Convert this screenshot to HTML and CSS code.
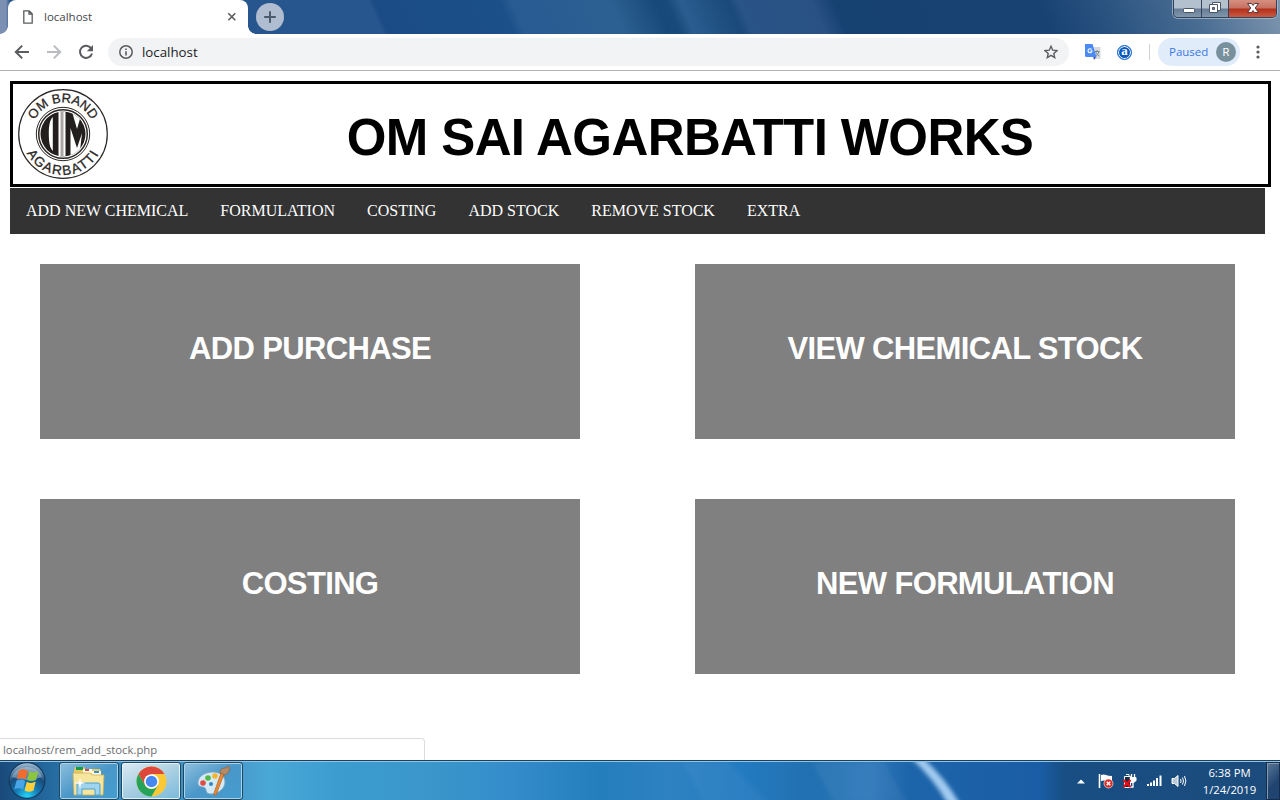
FILE: index.html
```html
<!DOCTYPE html>
<html lang="en">
<head>
<meta charset="utf-8">
<title>localhost</title>
<link rel="stylesheet" href="styles.css">
</head>
<body>
<div class="screen">
  <div class="tabstrip">
    <div class="tab">
      <svg class="tab-file" width="10" height="14" viewBox="0 0 10 14"><path d="M.8.8h5.4l3 3v9.4H.8z M6 1v3h3" fill="none" stroke="#5a5c60" stroke-width="1.3"/></svg>
      <span class="tab-title">localhost</span>
      <svg width="10" height="10" viewBox="0 0 10 10"><path d="M1.300 1.300l7 7M8.300 1.300l-7 7" stroke="#5a5c60" stroke-width="1.600"/></svg>
    </div>
    <div class="newtab"><svg width="28" height="28" viewBox="0 0 28 28"><path d="M14 8.200v11.600M8.200 14h11.600" stroke="#4c5a70" stroke-width="2"/></svg></div>
    <div class="winbtns">
      <span class="wb wb-min"><svg width="28" height="18" viewBox="0 0 28 18"><rect x="9.500" y="8.500" width="11" height="4" rx=".8" fill="#fff" stroke="#4a5568"/></svg></span>
      <span class="wb wb-max"><svg width="26" height="18" viewBox="0 0 26 18"><path d="M10.500 2.500h8v8h-8z" fill="#fff" stroke="#4a5568"/><path d="M7.500 4.500h8v8h-8z" fill="#fff" stroke="#4a5568"/><path d="M10.500 7.500h2v2h-2z" fill="#71869b" stroke="#4a5568"/></svg></span>
      <span class="wb wb-close"><svg width="47" height="18" viewBox="0 0 47 18"><path d="M18.500 3.500h4l1.500 2 1.500-2h4l-3.300 4.500 3.300 4.500h-4l-1.500-2-1.500 2h-4l3.300-4.500z" fill="#fff" stroke="#583a40"/></svg></span>
    </div>
  </div>
  <div class="toolbar">
    <div class="navicons">
      <svg width="16" height="16" viewBox="0 0 16 16"><path d="M15 8H2M8.200 1.600L1.800 8l6.400 6.400" fill="none" stroke="#5a5c60" stroke-width="2"/></svg>
      <svg width="16" height="16" viewBox="0 0 16 16"><path d="M1 8h13M7.800 1.600L14.200 8l-6.400 6.400" fill="none" stroke="#babbbe" stroke-width="2"/></svg>
      <svg width="16" height="16" viewBox="0 0 16 16"><path d="M13.200 4.400A6.100 6.100 0 1 0 14 9.400" fill="none" stroke="#5a5c60" stroke-width="2"/><path d="M15 1v6.200H8.800z" fill="#5a5c60"/></svg>
    </div>
    <div class="omnibox">
      <svg width="14" height="14" viewBox="0 0 14 14"><circle cx="7" cy="7" r="6.200" fill="none" stroke="#5a5c60" stroke-width="1.500"/><path d="M7 6.200v4.300M7 3.400v1.600" stroke="#5a5c60" stroke-width="1.600"/></svg>
      <span class="url">localhost</span>
      <svg width="14" height="14" viewBox="0 0 14 14"><path d="M7 1.300l1.700 3.900 4.300.4-3.200 2.800.9 4.200L7 10.400l-3.700 2.200.9-4.200L1 5.600l4.300-.4z" fill="none" stroke="#5a5c60" stroke-width="1.400"/></svg>
    </div>
    <svg class="ext-tr" width="17" height="17" viewBox="0 0 17 17"><path d="M6 3h9.500v12H10z" fill="#d8dade"/><path d="M9.500 7.500h5M12 6v1.500M10.500 7.500c1 2.500 2.500 4 4 4.500M14 7.500c-.7 2.500-2 4-3.500 4.500" fill="none" stroke="#718791" stroke-width="1"/><path d="M8 12h3v1l-2 3z" fill="#3a4bb7"/><path d="M0 0h7.500l4 13H1.500Q0 13 0 11.500z" fill="#4a8af4"/><path d="M6.600 5.500A2 2 0 1 0 7 7H5.300" fill="none" stroke="#fff" stroke-width="1.100"/></svg>
    <span class="ext-a">a</span>
    <span class="sep"></span>
    <div class="paused"><span>Paused</span><b>R</b></div>
    <svg class="dots" width="4" height="14" viewBox="0 0 4 14"><g fill="#5a5c60"><circle cx="2" cy="2" r="1.600"/><circle cx="2" cy="7" r="1.600"/><circle cx="2" cy="12" r="1.600"/></g></svg>
  </div>
  <main class="page">
    <header class="banner">
      <svg class="logo" width="92" height="92" viewBox="0 0 92 92">
        <defs>
          <path id="arc-top" d="M14.500 46a31.500 31.500 0 0 1 63 0"/>
          <path id="arc-low" d="M5 46a41 41 0 0 0 82 0"/>
          <clipPath id="disc"><circle cx="46" cy="46" r="22.500"/></clipPath>
        </defs>
        <g fill="none" stroke="#2b2725"><circle cx="46" cy="46" r="44.300" stroke-width="1.200"/><circle cx="46" cy="46" r="26.700" stroke-width="1"/><circle cx="46" cy="46" r="24.300" stroke-width="1.500"/></g>
        <g clip-path="url(#disc)">
          <path d="M20 20h52v52H20z" fill="#231f1e"/>
          <path d="M41.500 20h7v52h-7z" fill="#fff"/>
          <path d="M43.500 20h3v52h-3z" fill="#aaa7a6"/>
          <path d="M35.800 29v34c-2.800-3-4-8-4-17s1.200-14 4-17zM54 20l6 21 5-17v-4zM53.500 40L60 60l5-15-3 27h-8.500z" fill="#fff"/>
        </g>
        <g class="logo-text"><text><textPath href="#arc-top" startOffset="50%">OM BRAND</textPath></text><text class="logo-low"><textPath href="#arc-low" startOffset="50%">AGARBATTI</textPath></text></g>
      </svg>
      <h1>OM SAI AGARBATTI WORKS</h1>
    </header>
    <nav class="menu"><a>ADD NEW CHEMICAL</a><a>FORMULATION</a><a>COSTING</a><a>ADD STOCK</a><a>REMOVE STOCK</a><a>EXTRA</a></nav>
    <section class="tiles">
      <div class="tile">ADD PURCHASE</div><div class="tile">VIEW CHEMICAL STOCK</div>
      <div class="tile">COSTING</div><div class="tile">NEW FORMULATION</div>
    </section>
    <div class="status">localhost/rem_add_stock.php</div>
  </main>
  <footer class="taskbar">
    <svg class="streaks" width="1280" height="38" viewBox="0 0 1280 38" preserveAspectRatio="none">
      <defs><filter id="soft"><feGaussianBlur stdDeviation="2"/></filter></defs>
      <g filter="url(#soft)"><path d="M682 0h46l40 40h-64z" fill="#fff" opacity=".04"/><path d="M812 0h72l22 40h-72z" fill="#fff" opacity=".05"/><path d="M911-4h12q22 20 37 46h-12q-15-26-37-46z" fill="#a3cbf0"/></g>
    </svg>
    <div class="start">
      <svg width="40" height="38" viewBox="0 0 40 38">
        <defs><radialGradient id="orb" cx=".5" cy=".95" r=".95"><stop offset="0" stop-color="#25d5fa"/><stop offset=".35" stop-color="#157ab5"/><stop offset=".65" stop-color="#174c7c"/><stop offset="1" stop-color="#a9c4d8"/></radialGradient></defs>
        <circle cx="20" cy="18.500" r="17.800" fill="url(#orb)" stroke="#16395c" stroke-width="1.200"/>
        <path d="M5 15a15.500 13.500 0 0 1 30 0q-15 6-30 0z" fill="#fff" opacity=".3"/>
        <path d="M11.800 8.500q4.500-2.800 9 .2l-2.200 8.800q-4.300-2.500-8.700 0z" fill="#ef6b2e"/><path d="M22.300 9.300q4.300 2.300 9-.3l-2.200 8.800q-4.400 2.300-8.900.3z" fill="#8cc63f"/><path d="M9.500 18.800q4.300-2.500 8.700.2L16 27.500q-4.400-2.600-8.700 0z" fill="#4aa5e8"/><path d="M19.800 19.800q4.300 2.500 8.900-.2l-2.200 8.800q-4.500 2.600-8.900 0z" fill="#ffcf3a"/>
      </svg>
    </div>
    <div class="task"><svg width="34" height="32" viewBox="0 0 34 32"><path d="M2 5l1-3h9l1 2h15l1 3v22H2z" fill="#e6c865"/><path d="M4 2h7v3H4z" fill="#169c46"/><path d="M11 4h9v4h-9z" fill="#fff8dc"/><path d="M13 4h4v2h-4z" fill="#d8473b"/><path d="M20 6h9v4h-9z" fill="#fff8dc"/><path d="M22 6h5v2h-5z" fill="#2f91dc"/><path d="M1 8h17l2 2h12l-1 20H2z" fill="#f6e59c" stroke="#cfb155" stroke-width=".8"/><path d="M5 30V19q0-1 1-1h20q2 0 2 2v10h-5v-6H10v6z" fill="#9fd4f0" stroke="#4aa0cf"/><path d="M8 12l1 5 5 1-5 1-1 5-1-5-5-1 5-1z" fill="#fff"/></svg></div>
    <div class="task active"><svg width="31" height="31" viewBox="0 0 32 32"><circle cx="16" cy="16" r="15.500" fill="#fbc938"/><path d="M2.600 8.250A15.500 15.500 0 0 1 29.400 8.250H16L9.300 19.900z" fill="#de483a"/><path d="M2.600 8.250L9.300 19.900a7.750 7.750 0 0 0 13.400 0L16 31.500A15.500 15.500 0 0 1 2.600 8.250z" fill="#26a35a"/><circle cx="16" cy="16" r="7.600" fill="#fff"/><circle cx="16" cy="16" r="6" fill="#4788f0"/></svg></div>
    <div class="task"><svg width="34" height="32" viewBox="0 0 34 32"><path d="M17 7C7 7 1 13 2 19c1 4 5 2 7 4s0 6 6 6c8 0 14-6 14-12S24 7 17 7z" fill="#d5eaf7" stroke="#7ea6c5"/><circle cx="7" cy="18" r="2.800" fill="#e04b43"/><circle cx="12" cy="13" r="2.800" fill="#54b848"/><circle cx="19" cy="11" r="2.800" fill="#f4b52c"/><circle cx="15" cy="19" r="2" fill="#3787be"/><path d="M28 9l-3-1-7 20q0 3 2 2z" fill="#e98a35" stroke="#b85e1c" stroke-width=".7"/><path d="M24 8q0-5 5-5l4-2q2 6-4 9z" fill="#b58a66" stroke="#8c613e" stroke-width=".7"/></svg></div>
    <div class="tray">
      <svg class="tray-up" width="8" height="5" viewBox="0 0 8 5"><path d="M0 4.500L4 .5l4 4z" fill="#fff"/></svg>
      <svg class="tray-flag" width="16" height="16" viewBox="0 0 16 16"><path d="M1.500 1v14" stroke="#fff" stroke-width="1.600"/><path d="M3 2q3-1 5 0t6 1v6q-4 0-6-1T3 8z" fill="#fff"/><circle cx="10.500" cy="10.500" r="4.500" fill="#d92a24" stroke="#fff" stroke-width=".6"/><path d="M8.700 8.700l3.600 3.600M12.300 8.700l-3.600 3.600" stroke="#fff" stroke-width="1.400"/></svg>
      <svg class="tray-power" width="16" height="16" viewBox="0 0 16 16"><path d="M2.500 3.500h6v11h-6zM4 1.500h3v2" fill="#182c48" stroke="#fff"/><path d="M8 4.500h6v3l-2 2H9z" fill="#fff" stroke="#fff"/><path d="M9.500 1v3M12.500 1v3M11 10v4H9" fill="none" stroke="#fff" stroke-width="1.300"/><path d="M1.500 7l7 7M8.500 7l-7 7" stroke="#f00b12" stroke-width="2.400"/></svg>
      <svg class="tray-net" width="16" height="14" viewBox="0 0 16 14"><path d="M0 10h2v2H0zM3 8.500h2V12H3zM6 6.500h2V12H6zM9 4h2v8H9zM12.500 1.500h2V12h-2z" fill="#fff"/></svg>
      <svg class="tray-vol" width="16" height="14" viewBox="0 0 16 14"><path d="M1 4.500h2.500L7 1.500v11l-3.500-3H1z" fill="#b9c9d9" stroke="#fff"/><path d="M9.500 5q1.200 2 0 4M11.500 3.500q2 3.500 0 7M13.500 2q2.800 5 0 10" fill="none" stroke="#fff"/></svg>
      <div class="clock">6:38 PM<br>1/24/2019</div>
      <span class="desk"></span>
    </div>
  </footer>
</div>
</body>
</html>
```

FILE: styles.css
```css
* { box-sizing: border-box; }
body { margin: 0; font-family: "Open Sans", sans-serif; overflow: hidden; }
svg { display: block; flex: none; }
.screen { width: 1280px; height: 800px; display: flex; flex-direction: column; background: #fff; }

.tabstrip { height: 34px; padding-left: 8px; display: flex; align-items: flex-start;
  background:
    linear-gradient(90deg, #7b90b2 0, #7b90b2 6px, transparent 10px),
    linear-gradient(66deg, transparent 0 328px, transparent 350px, #1b4b84 355px, #1c5088 470px, #285b92 480px, #2d6092 570px, #18497b 612px, #184a7c 622px, #2b5d90 635px, #1a497b 678px, #295488 688px, #295283 754px, #164272 774px, #174272 960px, #27507e 1010px, #496d93 1100px, #7d95ad 1180px),
    #27558d; }
.tab { position: relative; width: 240px; height: 34px; padding: 0 11px 0 15px; display: flex; align-items: center; background: #fff; border-radius: 8px 8px 0 0; }
.tab::before, .tab::after { content: ""; position: absolute; bottom: 0; width: 8px; height: 8px; }
.tab::before { left: -8px; background: radial-gradient(circle at 0 0, transparent 7.500px, #fff 8px); }
.tab::after { right: -8px; background: radial-gradient(circle at 100% 0, transparent 7.500px, #fff 8px); }
.tab-title { flex: 1; padding-left: 11px; margin-top: -2px; font-size: 11.500px; color: #45474a; }
.newtab { width: 28px; height: 28px; margin: 3px 0 0 8px; border-radius: 50%; background: #b0bdd0; }
.winbtns { display: flex; height: 18px; margin-left: auto; margin-right: 3px; border: 1px solid #33435a; border-top: 0; border-radius: 0 0 5px 5px; box-shadow: 0 0 0 1px #b4c2d0b0; overflow: hidden; }
.wb { border-right: 1px solid #34445a; background: linear-gradient(#b3c1cf 0 8px, #667c94 9px, #8197ac); }
.wb-min { width: 28px; }
.wb-max { width: 27px; }
.wb-close { width: 47px; border: 0; background: linear-gradient(#d58f80 0, #c67161 8px, #b3301b 9px, #cb5a43); }

.toolbar { height: 37px; border-bottom: 1px solid #b3b3b3; display: flex; align-items: center; background: #fff; }
.navicons { width: 108px; padding-left: 14px; display: flex; gap: 16px; }
.omnibox { width: 961px; height: 28px; border-radius: 14px; background: #f1f3f4; padding: 0 11px; display: flex; align-items: center; }
.url { flex: 1; padding-left: 9px; font-size: 13.300px; color: #202124; }
.ext-tr { margin-left: 16px; }
.ext-a { width: 15px; height: 15px; margin-left: 15px; border-radius: 50%; border: 1px solid #1c6fce; box-shadow: inset 0 0 0 1px #fff; background: #0c58bd; color: #fff; font: bold 13px/10px "Liberation Serif", serif; text-align: center; }
.sep { width: 1px; height: 16px; margin-left: 17px; background: #cfd1d4; }
.paused { width: 82px; height: 28px; margin-left: 8px; border-radius: 14px; background: #e1ecfb; color: #3b78e7; font-size: 11.500px; display: flex; align-items: center; justify-content: space-between; padding: 0 4px 0 11px; }
.paused span { margin-top: -2px; }
.paused b { width: 20px; height: 20px; border-radius: 50%; background: #78909c; color: #fff; font: 11px/21px Roboto, sans-serif; text-align: center; }
.dots { margin-left: 16px; }

.page { position: relative; flex: 1; padding: 10px 9px 0 10px; }
.banner { width: 1261px; height: 106px; border: 3px solid #000; padding: 4px 0 0 4px; display: flex; }
.logo-text { font: 13px "Liberation Sans", sans-serif; fill: #2b2725; stroke: #2b2725; stroke-width: .3px; text-anchor: middle; }
.logo-low { font-size: 13.500px; letter-spacing: 1.500px; }
.banner h1 { flex: 1; margin: 21px 0 0; padding-left: 3px; font: bold 51px/57px "Liberation Sans", Arial, sans-serif; letter-spacing: -.6px; text-align: center; }
.menu { width: 1255px; height: 46px; margin-top: 1px; background: #333; display: flex; }
.menu a { padding: 14px 16px; font: 16px/18px "Liberation Serif", "Times New Roman", serif; color: #fff; }
.tiles { padding: 30px; display: grid; grid-template-columns: 540px 540px; column-gap: 115px; row-gap: 60px; }
.tile { height: 175px; padding-bottom: 6px; display: flex; align-items: center; justify-content: center; background: #808080; color: #fff; font: bold 31px "Liberation Sans", Arial, sans-serif; letter-spacing: -.65px; }
.status { position: absolute; left: -1px; bottom: 0; width: 426px; height: 22px; border: 1px solid #dcdcdc; border-bottom: 0; border-radius: 0 4px 0 0; background: #fff; padding-left: 3px; font-size: 11.300px; line-height: 22px; color: #6b6c6e; }

.taskbar { position: relative; height: 40px; border-top: 1px solid #1d405c; box-shadow: inset 0 1px #91c5e5; display: flex; align-items: flex-start; padding-top: 1px;
  background: linear-gradient(90deg, #194a7b 0, #246a9f 50px, #3489bd 120px, #479ccd 240px, #4aa8d6 270px, #3b9cd0 340px, #3b96cb 430px, #348dca 510px, #257ebc 600px, #2e82c1 670px, #237bc1 740px, #2170b0 810px, #2c77b9 870px, #1d65aa 910px, #1a5da6 1040px, #184e83 1065px, #1c4b7c 1280px); }
.streaks { position: absolute; left: 0; top: 1px; }
.start { width: 59px; padding-left: 7px; }
.task { position: relative; width: 60px; height: 38px; margin-right: 2px; border: 1px solid #23465d; border-radius: 3px; box-shadow: inset 0 0 0 1px #a6d4ed; background: linear-gradient(145deg, #8ebfdd, #4a97c8 50%, #439dcf); display: flex; align-items: center; justify-content: center; }
.task.active { background: linear-gradient(155deg, #dceaf2, #a9cfe2 50%, #79badb); box-shadow: inset 0 0 0 1px #e4f3fb; }
.tray { position: relative; margin-left: auto; height: 38px; display: flex; align-items: center; color: #fff; }
.tray-flag { margin-left: 13px; }
.tray-power { margin-left: 8px; }
.tray-net { margin-left: 9px; }
.tray-vol { margin-left: 8px; }
.clock { width: 79px; padding-left: 6px; font-size: 11.300px; line-height: 17px; text-align: center; }
.desk { width: 14px; height: 38px; border: 1px solid #152d4c; box-shadow: inset 1px 1px #8298b1; background: linear-gradient(135deg, #5c7797, #1f4470 60%); }
```
